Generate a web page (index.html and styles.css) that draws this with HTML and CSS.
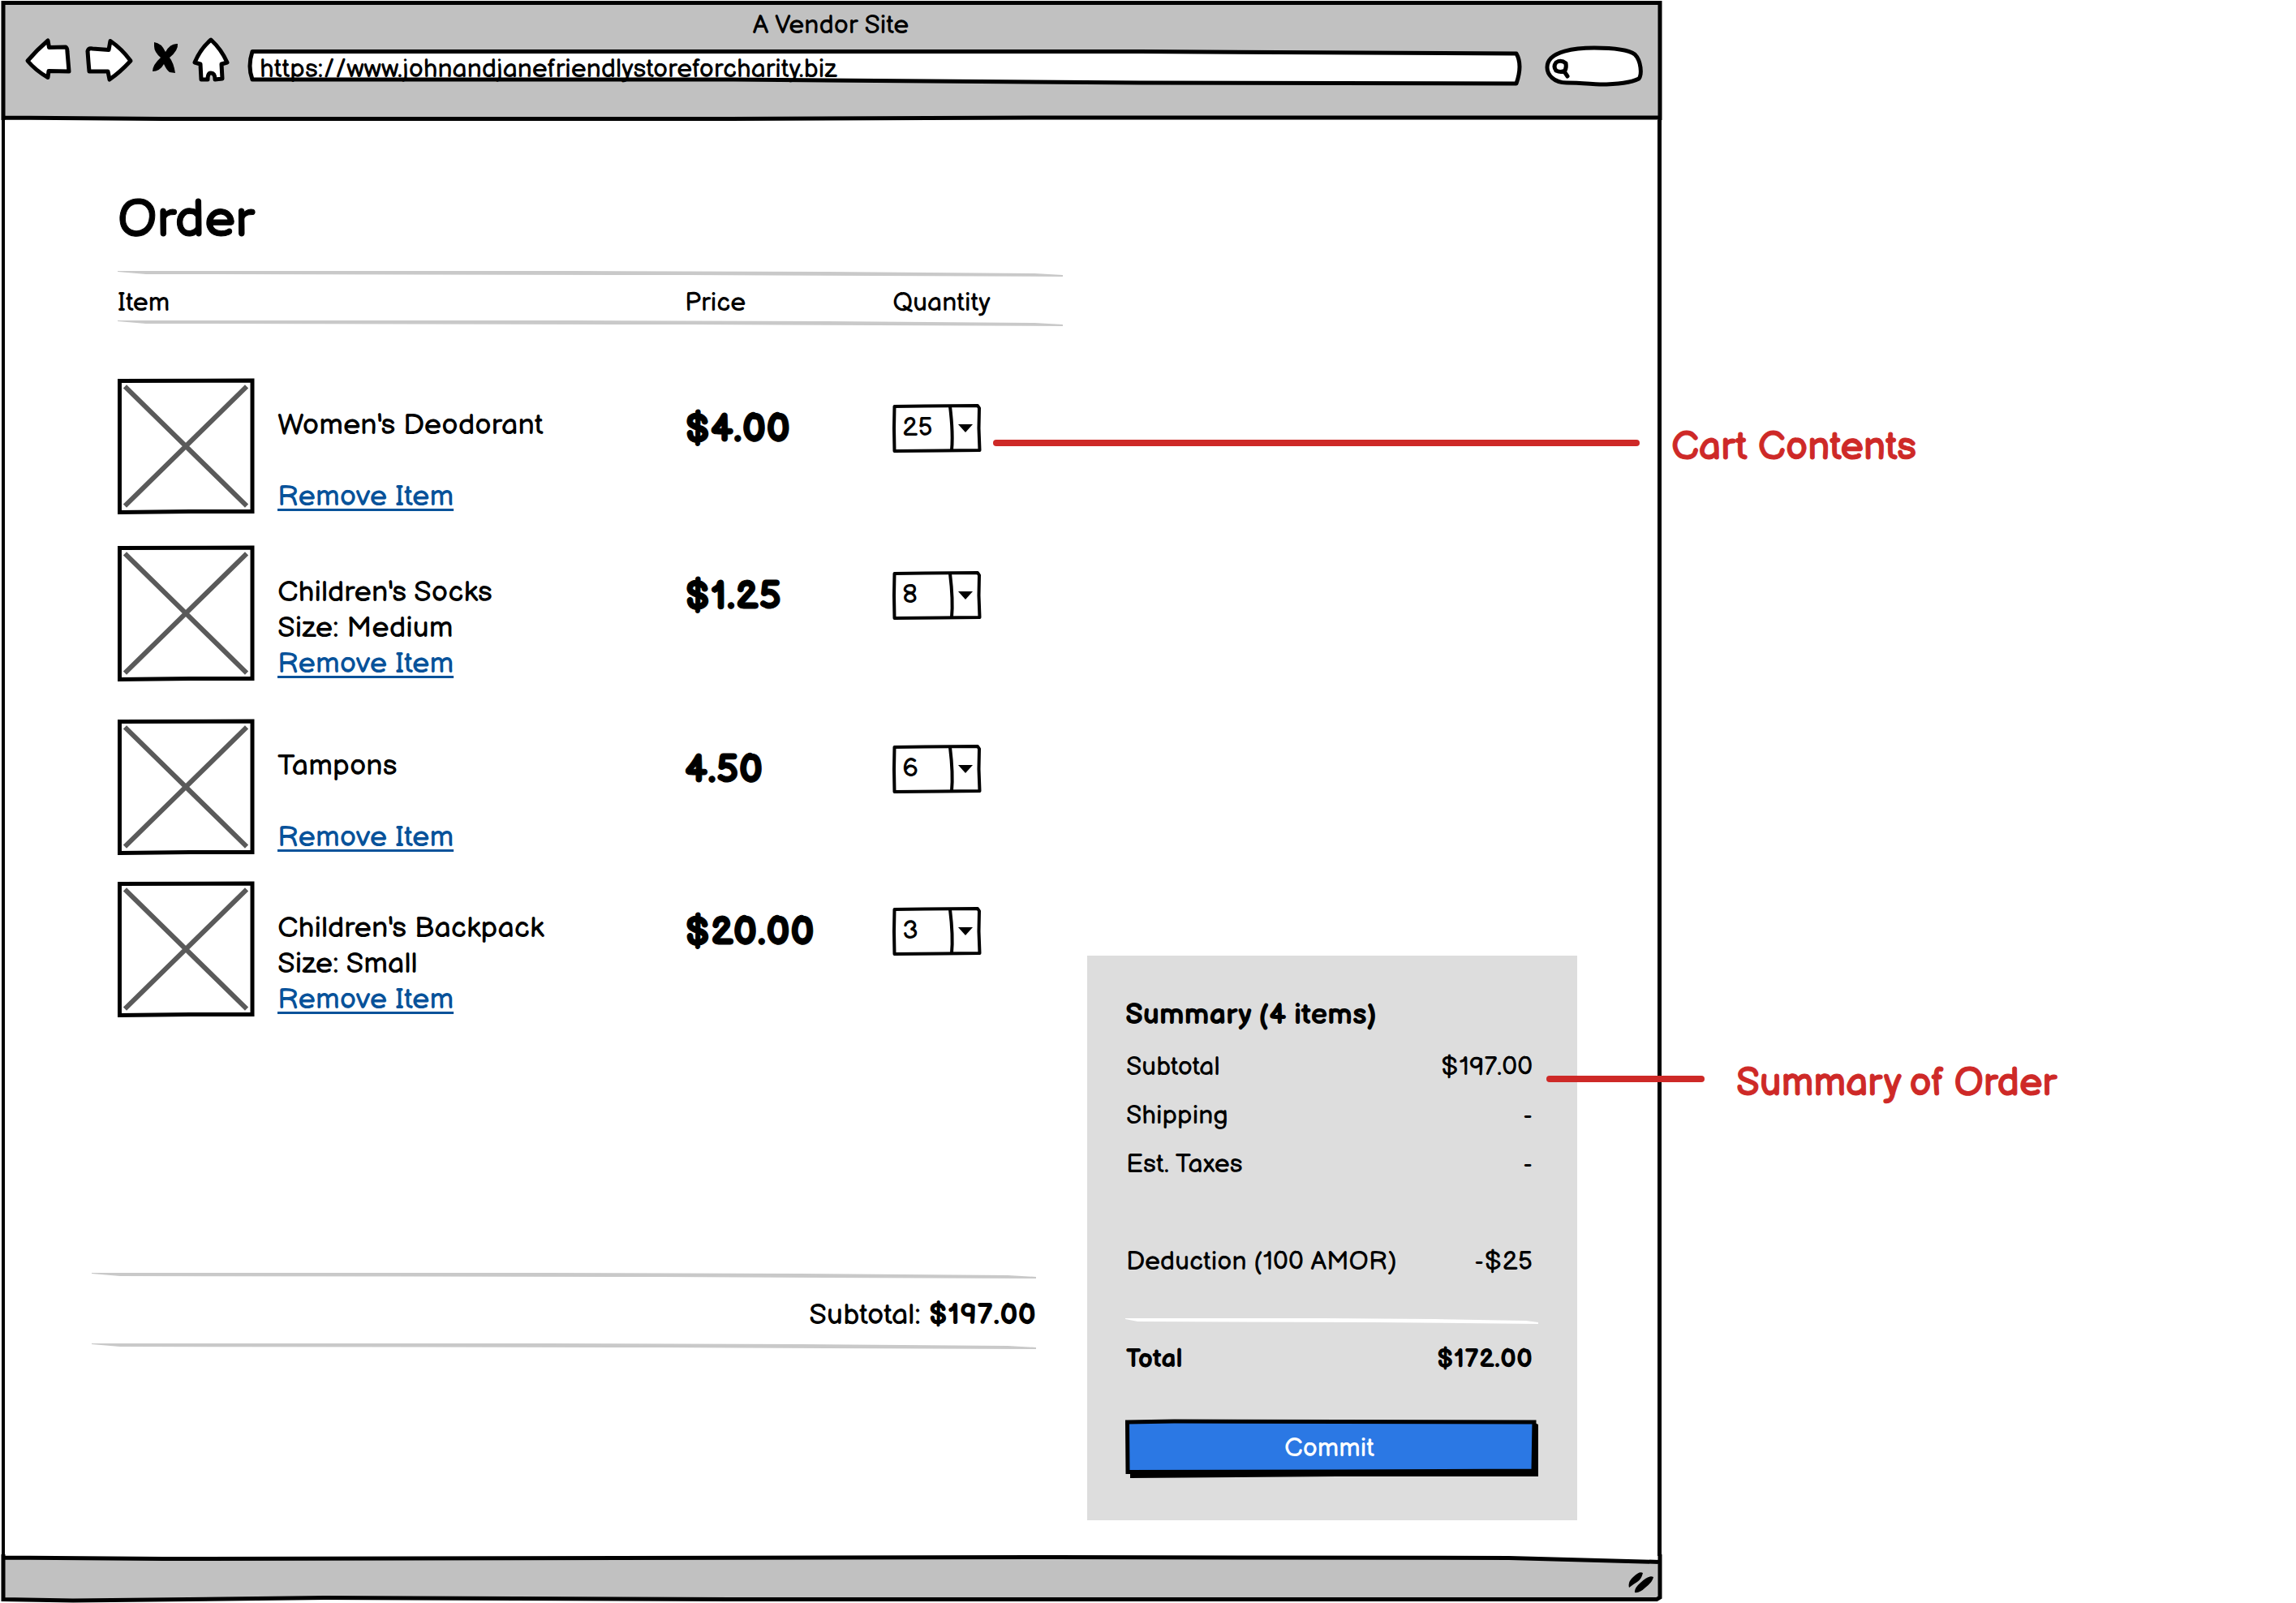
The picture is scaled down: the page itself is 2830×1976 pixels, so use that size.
FILE: index.html
```
<!DOCTYPE html>
<html lang="en">
<head>
<meta charset="utf-8">
<meta name="viewport" content="width=device-width, initial-scale=1">
<title>A Vendor Site</title>
<link rel="stylesheet" href="styles.css">
</head>
<body>
<svg class="defs" aria-hidden="true">
  <symbol id="placeholder" viewBox="0 0 170 168">
    <path d="M9 10 160 158M160 10 9 158" fill="none" stroke="#5a5a5a" stroke-width="6"/>
    <path d="M2.500 3 167 2.500V165L90 165 2.500 166Z" fill="none" stroke="#000" stroke-width="5"/>
  </symbol>
  <symbol id="dropdown" viewBox="0 0 110 60">
    <path d="M2.500 3 40 2.500 105 2 107 5 106.500 30 107.500 57 60 57.500 2.500 58 2 30Z" fill="#fff" stroke="#000" stroke-width="4" stroke-linejoin="round"/>
    <path d="M71 3Q75 36 73 57" fill="none" stroke="#000" stroke-width="4"/>
    <path d="M81 25H99L90 35Z"/>
  </symbol>
</svg>

<div class="page">
  <div class="window">
    <header class="toolbar">
      <svg class="backdrop" viewBox="0 0 2048 148" preserveAspectRatio="none" aria-hidden="true">
        <path d="M4 148V3.500H2046V148L2046 145H1300L900 146.500H200L4 145" fill="#c1c1c1" stroke="#000" stroke-width="5"/>
      </svg>
      <div class="site-title">A Vendor Site</div>
      <div class="toolbar-row">
        <nav class="nav" aria-label="Browser">
          <button class="nav-button" type="button" aria-label="Back">
            <svg width="61" height="52" viewBox="30 48 61 52"><path class="ink" d="M34 75Q46 61 59 50L60.500 58.500 81 58Q83 59 83 64L85 88 60 87.500 59 95.500Q44 87 34 75Z"/></svg>
          </button>
          <button class="nav-button" type="button" aria-label="Forward">
            <svg width="65" height="52" viewBox="103 48 65 52"><path class="ink" d="M108 63Q109 59 114 60L134 61.500 136 50.500Q150 60 161 75 148 89 135 98L133 88 110 88Q109 77 108 63Z"/></svg>
          </button>
          <button class="nav-button" type="button" aria-label="Stop">
            <svg width="46" height="52" viewBox="180 48 46 52"><path d="M190 52Q199 53 204 64 210 53 219 54 220 62 209 71 214 77 216 90L209 89Q205 86 202 79 197 88 188 88 188 80 198 71 190 64 190 57Z"/></svg>
          </button>
          <button class="nav-button" type="button" aria-label="Home">
            <svg width="46" height="52" viewBox="238 48 46 52"><path class="ink" d="M260 49Q273 61 280 77L273 79 274 97 265 98Q265 90 260 90 256 90 256 98L248 98 247 79 240 77Q247 60 260 49Z"/></svg>
          </button>
        </nav>
        <div class="address">
          <svg class="backdrop" viewBox="0 0 1572 48" preserveAspectRatio="none" aria-hidden="true">
            <path d="M7 3.500H1100L1563 6Q1571 20 1563 43L1100 42 600 38 7 38Q1 22 7 3.500Z" fill="#fff" stroke="#000" stroke-width="5" stroke-linejoin="round"/>
          </svg>
          <input class="address-input" type="text" aria-label="Address" value="https://www.johnandjanefriendlystoreforcharity.biz">
        </div>
        <div class="search">
          <svg class="backdrop" viewBox="1904 56 122 52" aria-hidden="true">
            <path d="M1907 83C1907 62 1945 59 1965 59 1984 59 2007 61 2015 67 2023 75 2024 92 2020 97 2008 103 1985 104 1972 104 1955 103 1945 102 1931 102 1915 102 1907 92 1907 83Z" fill="#fff" stroke="#000" stroke-width="5"/>
            <path d="M1918 87Q1914 82 1918 77 1924 73 1930 78 1931 83 1929 87 1924 90 1918 87M1928 88 1932 94" fill="none" stroke="#000" stroke-width="5" stroke-linecap="round"/>
          </svg>
          <input class="search-input" type="search" aria-label="Search">
        </div>
      </div>
    </header>

    <main class="content">
      <section class="cart">
        <h1 class="heading">Order</h1>
        <table class="items">
          <thead>
            <tr><th class="col-item" scope="col">Item</th><th class="col-price" scope="col">Price</th><th class="col-qty" scope="col">Quantity</th></tr>
          </thead>
          <tbody>
            <tr>
              <td><div class="item"><svg class="thumb" aria-hidden="true"><use href="#placeholder"/></svg>
                <div class="info"><span>Women's Deodorant</span><a class="remove" href="#">Remove Item</a></div></div></td>
              <td class="price">$4.00</td>
              <td class="quantity"><div class="picker"><svg class="backdrop" aria-hidden="true"><use href="#dropdown"/></svg><select class="picker-select" aria-label="Quantity of Women's Deodorant"><option>25</option></select></div></td>
            </tr>
            <tr>
              <td><div class="item item-loose"><svg class="thumb" aria-hidden="true"><use href="#placeholder"/></svg>
                <div class="info"><span>Children's Socks</span><span>Size: Medium</span><a class="remove" href="#">Remove Item</a></div></div></td>
              <td class="price">$1.25</td>
              <td class="quantity"><div class="picker"><svg class="backdrop" aria-hidden="true"><use href="#dropdown"/></svg><select class="picker-select" aria-label="Quantity of Children's Socks"><option>8</option></select></div></td>
            </tr>
            <tr>
              <td><div class="item item-tight"><svg class="thumb" aria-hidden="true"><use href="#placeholder"/></svg>
                <div class="info"><span>Tampons</span><a class="remove" href="#">Remove Item</a></div></div></td>
              <td class="price">4.50</td>
              <td class="quantity"><div class="picker"><svg class="backdrop" aria-hidden="true"><use href="#dropdown"/></svg><select class="picker-select" aria-label="Quantity of Tampons"><option>6</option></select></div></td>
            </tr>
            <tr>
              <td><div class="item"><svg class="thumb" aria-hidden="true"><use href="#placeholder"/></svg>
                <div class="info"><span>Children's Backpack</span><span>Size: Small</span><a class="remove" href="#">Remove Item</a></div></div></td>
              <td class="price">$20.00</td>
              <td class="quantity"><div class="picker"><svg class="backdrop" aria-hidden="true"><use href="#dropdown"/></svg><select class="picker-select" aria-label="Quantity of Children's Backpack"><option>3</option></select></div></td>
            </tr>
          </tbody>
        </table>
        <div class="subtotal">Subtotal: <strong>$197.00</strong></div>
      </section>

      <aside class="summary">
        <h2 class="summary-title">Summary (4 items)</h2>
        <dl class="lines">
          <div class="line"><dt>Subtotal</dt><dd>$197.00</dd></div>
          <div class="line"><dt>Shipping</dt><dd>-</dd></div>
          <div class="line"><dt>Est. Taxes</dt><dd>-</dd></div>
          <div class="line line-deduction"><dt>Deduction (100 AMOR)</dt><dd>-$25</dd></div>
          <div class="line line-total"><dt>Total</dt><dd>$172.00</dd></div>
        </dl>
        <button class="commit" type="button">
          <svg class="backdrop" viewBox="0 0 508 72" preserveAspectRatio="none" aria-hidden="true">
            <path d="M6 6 504 4 508 6V70L260 70 6 72Z"/>
            <path d="M2.500 3 60 2 503 3 502 63 260 64 3 64.500Z" fill="#2b78e4" stroke="#000" stroke-width="5"/>
          </svg>
          <span class="commit-label">Commit</span>
        </button>
      </aside>
    </main>

    <footer class="status">
      <svg class="backdrop" viewBox="0 1918 2048 56" preserveAspectRatio="none" aria-hidden="true">
        <path d="M4 1916V1920L200 1921.500 1300 1919.500 1860 1920.500 2046 1925.500V1916 1969L2042 1971.500H900L400 1969.500 90 1973 4 1971.500Z" fill="#c1c1c1"/>
        <path d="M6 1916H2043V1923L1860 1918H6Z" fill="#fff"/>
        <path d="M4 1916V1971.500L90 1973 400 1969.500 900 1971.500H2042L2046 1969V1916M4 1920 200 1921.500 1300 1919.500 1860 1920.500 2046 1925.500" fill="none" stroke="#000" stroke-width="5"/>
      </svg>
      <svg class="grip" width="34" height="28" viewBox="2006 1937 34 28" aria-hidden="true">
        <path d="M2008 1957Q2006 1950 2013 1944 2021 1936 2025 1939 2023 1947 2018 1950 2013 1953 2008 1957ZM2015 1963Q2014 1958 2022 1951 2032 1941 2038 1944 2037 1950 2028 1957 2021 1964 2015 1963Z"/>
      </svg>
    </footer>
  </div>

  <p class="callout callout-cart"><span class="callout-line"></span><span class="callout-text">Cart Contents</span></p>
  <p class="callout callout-summary"><span class="callout-line"></span><span class="callout-text">Summary of Order</span></p>
</div>
</body>
</html>
```
FILE: styles.css
```
*, *::before, *::after { box-sizing: border-box; }

body {
  margin: 0;
  background: #fff;
  color: #000;
  font-family: "Balsamiq Sans", Inter, "Open Sans", sans-serif;
  font-size: 32px;
  font-weight: 400;
  font-feature-settings: "cv11", "cv08";
}

button, input, select { font: inherit; font-feature-settings: inherit; color: inherit; }

.defs { position: absolute; width: 0; height: 0; }

.backdrop {
  position: absolute;
  inset: 0;
  width: 100%;
  height: 100%;
  overflow: visible;
  pointer-events: none;
}

/* Felt-tip weight for the large lettering */
.heading, .price, .callout { -webkit-text-stroke: 1px currentColor; }

.page {
  position: relative;
  display: grid;
  grid-template-columns: 2048fr 782fr;
  min-height: 100vh;
}

.window {
  display: flex;
  flex-direction: column;
  padding-bottom: 2px;
}

/* Browser chrome */
.toolbar { position: relative; height: 148px; padding: 16px 22px 0 30px; }
.site-title { position: relative; padding-right: 8px; line-height: 32px; text-align: center; }
.toolbar-row { position: relative; display: flex; height: 60px; }
.nav { display: flex; gap: 12px; margin-right: 20px; }
.nav-button {
  align-self: flex-start;
  display: block;
  padding: 0;
  border: 0;
  background: none;
  line-height: 0;
}
.nav-button svg { display: block; overflow: visible; }
.ink { fill: #fff; stroke: #000; stroke-width: 5px; stroke-linejoin: round; }

.address { position: relative; flex: 1; height: 48px; align-self: flex-end; }
.address-input {
  position: relative;
  width: 100%;
  height: 48px;
  padding: 2px 16px 0;
  border: 0;
  background: none;
}
.search { position: relative; width: 122px; height: 52px; margin-left: 26px; align-self: flex-end; }
.search-input {
  position: relative;
  width: 100%;
  height: 52px;
  padding: 0 16px 0 34px;
  border: 0;
  background: none;
  appearance: none;
}

/* Page body */
.content {
  flex: 1;
  display: flex;
  gap: 30px;
  margin-left: 2px;
  padding: 84px 99px 44px 107px;
  border-left: 4px solid #000;
  border-right: 5px solid #000;
}

.cart { flex: 1; display: flex; flex-direction: column; }
.heading { margin: 0 0 22px 32px; font-size: 64px; font-weight: 400; line-height: 80px; }

.items { margin-left: 32px; border-collapse: collapse; table-layout: fixed; }
.items thead { position: relative; }
.items th { padding: 12px 0 0; font-weight: 400; line-height: 56px; text-align: left; }
.items td { padding: 0; vertical-align: top; }
.items tbody::before { content: ""; display: table-row; height: 64px; }
.col-item { width: 60%; }
.col-price { width: 22%; }
.col-qty { width: 18%; }

/* Brush-like rules that taper at both ends */
.col-item::before, .col-item::after,
.subtotal::before, .subtotal::after,
.line-total::before {
  content: "";
  position: absolute;
  left: 0;
  right: 0;
  height: 7px;
  background: #c9c9c9;
  clip-path: polygon(0 0, 48% 0, 75% 1px, 97% 3px, 100% 5px, 100% 7px, 60% 5px, 3% 4px, 0 1px);
}
.col-item::before, .subtotal::before { top: 0; }
.col-item::after, .subtotal::after { bottom: 0; }

.item { display: flex; gap: 28px; padding-bottom: 37px; font-size: 36px; line-height: 44px; }
.item-loose { padding-bottom: 45px; }
.item-tight { padding-bottom: 31px; }
.thumb { flex: none; width: 169px; height: 168px; }
.info { display: flex; flex-direction: column; align-items: flex-start; min-height: 169px; padding-top: 37px; }
.remove {
  margin-top: auto;
  color: #07529a;
  text-decoration-thickness: 3px;
  text-underline-offset: 4px;
  text-decoration-skip-ink: none;
}
.items .price { padding-top: 39px; font-size: 48px; font-weight: 700; line-height: 50px; }
.items .quantity { padding-top: 32px; }
.picker { position: relative; width: 110px; height: 60px; }
.picker-select {
  position: relative;
  display: block;
  width: 100%;
  height: 58px;
  padding: 0 40px 0 12px;
  border: 0;
  background: none;
  appearance: none;
}

.subtotal {
  position: relative;
  margin: auto 33px 211px 0;
  padding: 12px 0 0;
  font-size: 36px;
  line-height: 82px;
  text-align: right;
}

/* Order summary */
.summary {
  align-self: flex-end;
  width: 604px;
  padding: 50px 48px 52px 47px;
  background: #ddd;
}
.summary-title { margin: 0 0 10px; font-size: 36px; font-weight: 700; line-height: 48px; }
.lines { margin: 0 0 44px; }
.line { display: flex; justify-content: space-between; padding: 0 7px 0 1px; line-height: 60px; }
.line dd { margin: 0; }
.line-deduction { margin-top: 60px; }
.line-total { position: relative; margin-top: 39px; padding-top: 21px; font-weight: 700; }
.line-total::before { top: 0; background: #fff; }
.commit {
  position: relative;
  display: block;
  width: 100%;
  height: 72px;
  padding: 0 6px 2px 0;
  border: 0;
  background: none;
  color: #fff;
}
.commit-label { position: relative; }

.status { position: relative; height: 56px; display: flex; justify-content: flex-end; padding: 19px 8px 0; }
.grip { position: relative; }

/* Annotations laid over the mockup */
.callout {
  position: absolute;
  display: flex;
  align-items: center;
  gap: 39px;
  right: 0;
  margin: 0;
  color: #ce2927;
  font-size: 48px;
  line-height: 60px;
  pointer-events: none;
}
.callout-line { width: 195px; height: 8px; border-radius: 4px; background: currentColor; }
.callout-text { padding-top: 12px; }
.callout-cart { top: 510px; left: 43.25%; }
.callout-cart .callout-line { width: 797px; }
.callout-summary { top: 1294px; left: 67.35%; }
```
